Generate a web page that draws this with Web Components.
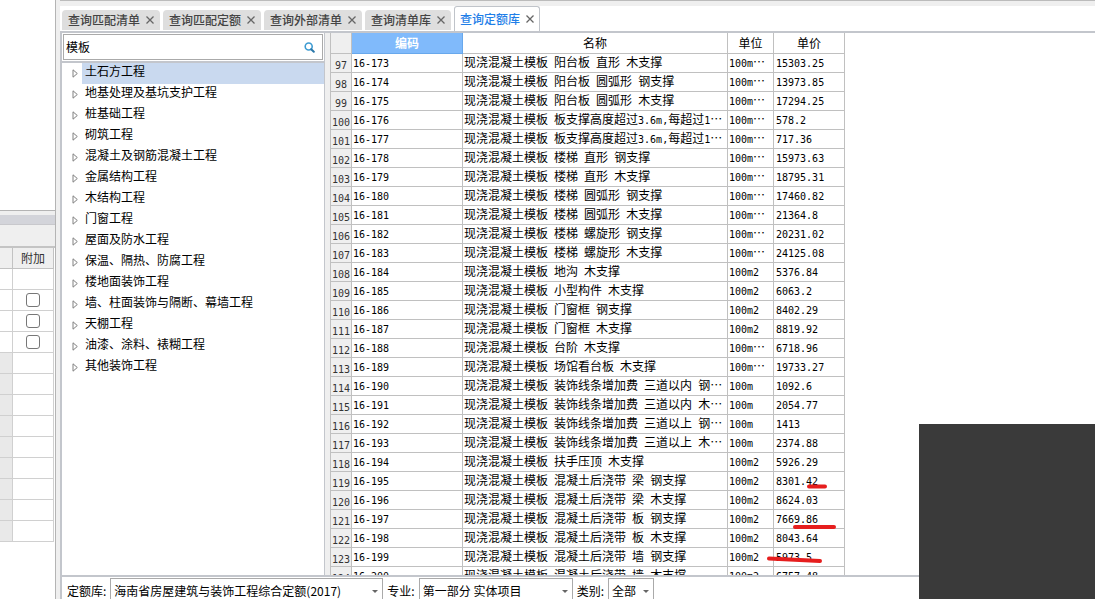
<!DOCTYPE html>
<html lang="zh-CN">
<head>
<meta charset="utf-8">
<title>查询定额库</title>
<style>
html, body { margin: 0; height: 100%; overflow: hidden; background: #fff; }
body { font: 12px/20px "Noto Sans CJK SC", sans-serif; color: #000; --line: #c3c6cc; --chrome: #efefef; }
</style>
</head>
<body>
<app-shell></app-shell>
<script>
const define = (name, html, setup) => {
  const tpl = document.createElement('template');
  tpl.innerHTML = html;
  customElements.define(name, class extends HTMLElement {
    connectedCallback() {
      if (this.shadowRoot) return;
      const root = this.attachShadow({ mode: 'open' });
      root.append(tpl.content.cloneNode(true));
      if (setup) setup(this, root);
    }
  });
};

define('fee-panel', `
<style>
:host { display: flex; flex-direction: column; width: 55px; border-right: 1px solid #b4b4b4; overflow: hidden; background: #fff; }
.top { height: 210px; border-bottom: 1px solid #b4b4b4; flex: none; }
.gap { height: 4px; background: var(--chrome); flex: none; }
.band { height: 9px; background: #d3d4da; border-bottom: 1px solid #c8c8cc; flex: none; }
.tools { height: 21px; background: var(--chrome); border-bottom: 2px solid #c4c4c4; flex: none; }
table { border-collapse: separate; border-spacing: 0; table-layout: fixed; width: 54px; }
th, td { box-sizing: border-box; height: 21px; padding: 0; border-right: 1px solid #d0d0d0; border-bottom: 1px solid #d0d0d0; text-align: center; vertical-align: middle; }
th { background: var(--chrome); color: #333; font-weight: 400; line-height: 20px; border-color: #c2c2c2; }
.code { width: 13px; }
.off { background: #e9e9e9; }
input { display: block; appearance: none; box-sizing: border-box; width: 14px; height: 14px; margin: 0 auto; border: 1px solid #777; border-radius: 3px; background: #fff; }
</style>
<div class="top"></div><div class="gap"></div><div class="band"></div><div class="tools"></div>
<table><thead><tr><th class="code"></th><th>附加</th></tr></thead><tbody></tbody></table>`,
(host, root) => {
  root.querySelector('tbody').innerHTML = Array.from({ length: 13 }, (_, i) =>
    `<tr><td class="${i > 3 ? 'off' : ''}"></td><td>${i > 0 && i < 4 ? '<input type="checkbox" aria-label="附加">' : ''}</td></tr>`).join('');
});

define('tab-item', `
<style>
:host { display: flex; align-items: center; gap: 6px; box-sizing: border-box; height: 20px; padding: 0 6px; background: #dedede; border-radius: 4px 4px 0 0; color: #444; font-weight: 500; }
:host([active]) { height: 25px; padding: 0 5px 0 5px; background: #fff; border: 1px solid #c0c4ca; border-bottom: 0; color: #1f7fe8; border-radius: 3px 3px 0 0; }
button { border: 0; padding: 0; background: none; font: inherit; line-height: 20px; color: inherit; display: block; white-space: nowrap; }
svg { display: block; width: 8px; height: 8px; }
path { stroke: #666; stroke-width: 1.3; fill: none; }
</style>
<button role="tab"><slot></slot></button>
<button aria-label="关闭"><svg viewBox="0 0 8 8"><path d="M.5.5l7 7M7.5.5l-7 7"/></svg></button>`);

define('tab-strip', `
<style>
:host { display: block; }
.edge { height: 5px; background: var(--chrome); border-top: 1px solid #bbb; }
.tabs { display: flex; align-items: flex-end; gap: 3px; height: 25px; padding-left: 2px; border-bottom: 2px solid var(--line); }
.tabs ::slotted(:not([active])) { margin-bottom: 1px; }
</style>
<div class="edge"></div><div class="tabs" role="tablist"><slot></slot></div>`);

define('search-field', `
<style>
:host { display: block; padding: 1px; border-bottom: 2px solid var(--line); }
label { display: flex; align-items: center; box-sizing: border-box; height: 26px; padding: 0 7px 0 2px; border: 1px solid #aaa; background: #fff; }
input { flex: 1; min-width: 0; border: 0; padding: 0; outline: 0; background: none; font: inherit; color: #000; }
svg { width: 11px; height: 11px; flex: none; }
</style>
<label><input type="text" value="模板" aria-label="搜索"><svg viewBox="0 0 11 11"><circle cx="4.7" cy="4.500" r="3.500" fill="none" stroke="#3d9bd2" stroke-width="1.600"/><path d="M7.2 7.2l2.600 2.600" stroke="#2b78aa" stroke-width="2" stroke-linecap="round"/></svg></label>`);

define('tree-item', `
<style>
:host { display: flex; height: 21px; padding-left: 10px; align-items: stretch; }
svg { width: 6px; height: 9px; margin: 6px 4px 0 0; flex: none; }
span { flex: 1; padding-left: 3px; line-height: 16px; white-space: nowrap; }
:host([selected]) span { background: #c9d9ef; }
</style>
<svg viewBox="0 0 6 9"><path d="M1 .8v7.4l4.3-3.7z" fill="#fff" stroke="#808080"/></svg><span><slot></slot></span>`);

define('chapter-panel', `
<style>
:host { display: flex; flex-direction: column; width: 262px; flex: none; border-right: 1px solid var(--line); background: #fff; }
nav { display: block; }
</style>
<search-field></search-field><nav></nav>`,
(host, root) => {
  root.querySelector('nav').innerHTML = ['土石方工程', '地基处理及基坑支护工程', '桩基础工程', '砌筑工程', '混凝土及钢筋混凝土工程', '金属结构工程', '木结构工程', '门窗工程', '屋面及防水工程', '保温、隔热、防腐工程', '楼地面装饰工程', '墙、柱面装饰与隔断、幕墙工程', '天棚工程', '油漆、涂料、裱糊工程', '其他装饰工程']
    .map((t, i) => `<tree-item${i ? '' : ' selected'}>${t}</tree-item>`).join('');
});

const rows = `阳台板 直形 木支撑|100m…|15303.25
阳台板 圆弧形 钢支撑|100m…|13973.85
阳台板 圆弧形 木支撑|100m…|17294.25
板支撑高度超过3.6m,每超过1…|100m…|578.2
板支撑高度超过3.6m,每超过1…|100m…|717.36
楼梯 直形 钢支撑|100m…|15973.63
楼梯 直形 木支撑|100m…|18795.31
楼梯 圆弧形 钢支撑|100m…|17460.82
楼梯 圆弧形 木支撑|100m…|21364.8
楼梯 螺旋形 钢支撑|100m…|20231.02
楼梯 螺旋形 木支撑|100m…|24125.08
地沟 木支撑|100m2|5376.84
小型构件 木支撑|100m2|6063.2
门窗框 钢支撑|100m2|8402.29
门窗框 木支撑|100m2|8819.92
台阶 木支撑|100m…|6718.96
场馆看台板 木支撑|100m…|19733.27
装饰线条增加费 三道以内 钢…|100m|1092.6
装饰线条增加费 三道以内 木…|100m|2054.77
装饰线条增加费 三道以上 钢…|100m|1413
装饰线条增加费 三道以上 木…|100m|2374.88
扶手压顶 木支撑|100m2|5926.29
混凝土后浇带 梁 钢支撑|100m2|8301.42
混凝土后浇带 梁 木支撑|100m2|8624.03
混凝土后浇带 板 钢支撑|100m2|7669.86
混凝土后浇带 板 木支撑|100m2|8043.64
混凝土后浇带 墙 钢支撑|100m2|5973.5
混凝土后浇带 墙 木支撑|100m2|6757.48`.split('\n').map((r, i) => [97 + i, '16-' + (173 + i), ...r.split('|')]);

// Half-width runs use a monospaced face at half the width of a full-width character.
const mixed = t => t.replace(/[\x20-\x7e]+/g, m => `<i>${m}</i>`);
const marks = { 119: 'M35 14.5H51', 121: 'M21 17H60', 123: 'M-5 10.500L46 13' };

define('quota-grid', `
<style>
:host { display: block; flex: 1; min-width: 0; overflow: hidden; background: #fff; }
table { border-collapse: separate; border-spacing: 0; table-layout: fixed; width: 515px; border-left: 1px solid #c0c0c0; }
.n { width: 21px; } .c { width: 111px; } .u { width: 46px; } .p { width: 71px; }
th, td { box-sizing: border-box; height: 19px; padding: 0 0 2px 1px; border-right: 1px solid #c0c0c0; border-bottom: 1px solid #c0c0c0; line-height: 16px; white-space: pre; text-align: left; vertical-align: middle; font-weight: 400; }
thead th { height: 21px; padding: 0; text-align: center; line-height: 20px; }
thead th:first-child, tbody th { background: var(--chrome); }
thead .on { background: #80bafb; color: #fff; font-weight: 700; border-color: #68a8ec; }
tbody th { padding: 2px 0 0; text-align: center; color: #333; }
i { font: 10px "DejaVu Sans Mono", monospace; }
.price { position: relative; padding-left: 2px; }
svg { position: absolute; left: 0; top: 0; width: 70px; height: 19px; overflow: visible; z-index: 1; }
path { stroke: #e61e1e; stroke-width: 4; stroke-linecap: round; fill: none; }
</style>
<table><colgroup><col class="n"><col class="c"><col><col class="u"><col class="p"></colgroup>
<thead><tr><th></th><th class="on">编码</th><th>名称</th><th>单位</th><th>单价</th></tr></thead><tbody></tbody></table>`,
(host, root) => {
  root.querySelector('tbody').innerHTML = rows.map(([n, c, name, u, p]) =>
    `<tr><th scope="row">${mixed(String(n))}</th><td>${mixed(c)}</td><td>${mixed('现浇混凝土模板 ' + name)}</td><td>${mixed(u)}</td><td class="price">${mixed(p)}${marks[n] ? `<svg aria-hidden="true"><path d="${marks[n]}"/></svg>` : ''}</td></tr>`).join('');
});

define('filter-select', `
<style>
:host { display: flex; gap: 4px; align-items: flex-start; }
label { line-height: 26px; white-space: nowrap; }
.box { position: relative; }
select { display: block; appearance: none; box-sizing: border-box; width: var(--w); height: 26px; margin: 0; padding: 0 0 0 3px; border: 1px solid #aaa; border-radius: 0; background: #fff; color: #000; font: inherit; }
svg { position: absolute; right: 5px; top: 12px; width: 6px; height: 3px; }
</style>
<label for="s"></label><span class="box"><select id="s"><option></option></select><svg viewBox="0 0 6 3"><path d="M0 0h6L3 3z" fill="#666"/></svg></span>`,
(host, root) => {
  root.querySelector('label').textContent = host.getAttribute('label');
  root.querySelector('option').textContent = host.getAttribute('value');
});

define('filter-bar', `
<style>
:host { display: flex; gap: 4px; height: 21px; padding: 1px 0 0 5px; border-top: 2px solid var(--line); overflow: hidden; flex: none; }
.lib { --w: 273px; } .part { --w: 154px; } .kind { --w: 46px; }
</style>
<filter-select class="lib" label="定额库:" value="海南省房屋建筑与装饰工程综合定额(2017)"></filter-select>
<filter-select class="part" label="专业:" value="第一部分 实体项目"></filter-select>
<filter-select class="kind" label="类别:" value="全部"></filter-select>`);

define('app-shell', `
<style>
:host { display: flex; height: 100vh; }
.split { width: 5px; background: var(--chrome); flex: none; }
.strip { width: 4px; background: var(--chrome); flex: none; }
main { flex: 1; min-width: 0; display: flex; flex-direction: column; }
.body { flex: 1; min-height: 0; display: flex; }
.wrap { flex: 1; min-height: 0; display: flex; flex-direction: column; border-left: 2px solid var(--line); }
.shade { position: fixed; right: 0; bottom: 0; width: 176px; height: 175px; background: #3a3a3a; z-index: 5; }
</style>
<fee-panel></fee-panel><div class="strip"></div>
<main>
<tab-strip><tab-item>查询匹配清单</tab-item><tab-item>查询匹配定额</tab-item><tab-item>查询外部清单</tab-item><tab-item>查询清单库</tab-item><tab-item active>查询定额库</tab-item></tab-strip>
<div class="wrap"><div class="body"><chapter-panel></chapter-panel><div class="split"></div><quota-grid></quota-grid></div><filter-bar></filter-bar></div>
</main>
<div class="shade"></div>`);
</script>
</body>
</html>
